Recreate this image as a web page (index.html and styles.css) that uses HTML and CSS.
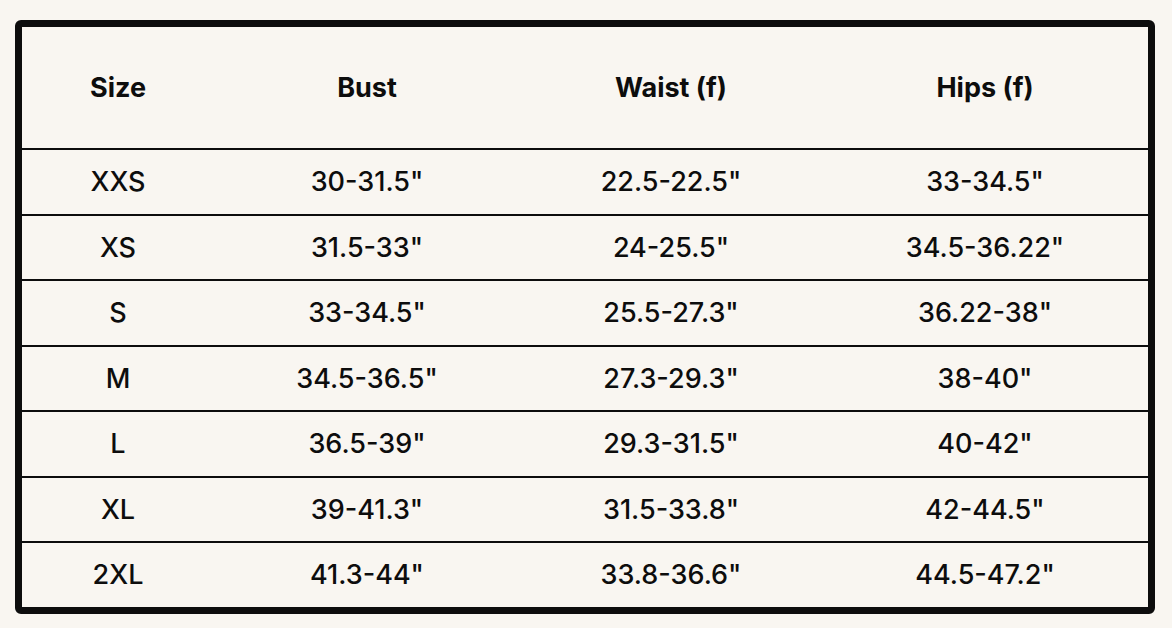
FILE: index.html
```html
<!DOCTYPE html>
<html>
  <head>
    <link rel="stylesheet" href="styles.css">
  </head>
  <body>
    <div class="chart">
      <table class="size-table">
        <colgroup>
          <col class="col-size">
          <col class="col-bust">
          <col class="col-waist">
          <col class="col-hips">
        </colgroup>
        <thead>
          <tr>
            <th>Size</th>
            <th>Bust</th>
            <th>Waist (f)</th>
            <th>Hips (f)</th>
          </tr>
        </thead>
        <tbody>
          <tr><td>XXS</td><td>30-31.5"</td><td>22.5-22.5"</td><td>33-34.5"</td></tr>
          <tr><td>XS</td><td>31.5-33"</td><td>24-25.5"</td><td>34.5-36.22"</td></tr>
          <tr><td>S</td><td>33-34.5"</td><td>25.5-27.3"</td><td>36.22-38"</td></tr>
          <tr><td>M</td><td>34.5-36.5"</td><td>27.3-29.3"</td><td>38-40"</td></tr>
          <tr><td>L</td><td>36.5-39"</td><td>29.3-31.5"</td><td>40-42"</td></tr>
          <tr><td>XL</td><td>39-41.3"</td><td>31.5-33.8"</td><td>42-44.5"</td></tr>
          <tr><td>2XL</td><td>41.3-44"</td><td>33.8-36.6"</td><td>44.5-47.2"</td></tr>
        </tbody>
      </table>
    </div>
  </body>
</html>
```

FILE: styles.css
```css
html, body {
  margin: 0;
  background: #f9f6f1;
}
body {
  padding: 20px 17px 16px 15px;
  font-family: "Inter", "Liberation Sans", sans-serif;
  color: #0d0d0d;
}
.chart {
  border: 7px solid #0d0d0d;
  border-radius: 6px;
  overflow: hidden;
}
.size-table {
  width: 100%;
  border-collapse: collapse;
  table-layout: fixed;
}
.col-size { width: 192px; }
.col-bust { width: 306px; }
.col-waist { width: 302px; }
.size-table th,
.size-table td {
  text-align: center;
  padding: 0;
  font-size: 27px;
}
.size-table th {
  height: 121px;
  font-weight: 700;
  border-bottom: 2px solid #0d0d0d;
}
.size-table td {
  height: 63.5px;
  font-weight: 500;
}
.size-table tbody tr + tr td {
  border-top: 2px solid #0d0d0d;
}
```
